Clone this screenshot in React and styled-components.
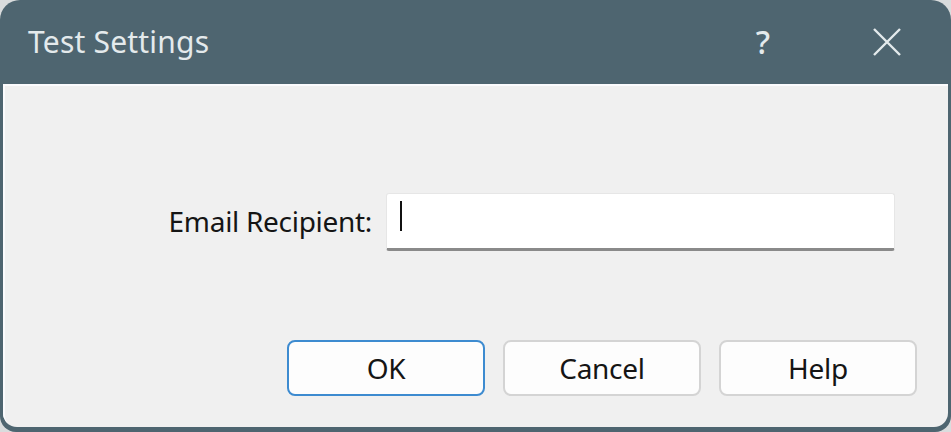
import React from "react";
import styled, { createGlobalStyle } from "styled-components";

const GlobalStyle = createGlobalStyle`
  html, body {
    margin: 0;
    padding: 0;
    background: #d9dcdd;
  }
  body {
    font-family: "Noto Sans", "Open Sans", "Liberation Sans", sans-serif;
  }
`;

function CloseIcon() {
  return (
    <svg width="30" height="30" viewBox="0 0 30 30">
      <path d="M2 2 L28 28 M28 2 L2 28" stroke="#e4eaec" strokeWidth="2.4" fill="none" />
    </svg>
  );
}

function App() {
  return (
    <>
      <GlobalStyle />
      <S.Window>
        <S.TitleBar>
          <S.Title>Test Settings</S.Title>
          <S.TitleButtons>
            <S.HelpMark>?</S.HelpMark>
            <S.CloseButton>
              <CloseIcon />
            </S.CloseButton>
          </S.TitleButtons>
        </S.TitleBar>

        <S.Client>
          <S.FieldRow>
            <S.Label htmlFor="email">Email Recipient:</S.Label>
            <S.InputBox>
              <S.Caret />
            </S.InputBox>
          </S.FieldRow>

          <S.ButtonRow>
            <S.Button $default>OK</S.Button>
            <S.Button>Cancel</S.Button>
            <S.Button>Help</S.Button>
          </S.ButtonRow>
        </S.Client>
      </S.Window>
    </>
  );
}

const S = {
  Window: styled.div`
    width: 951px;
    height: 432px;
    box-sizing: border-box;
    background: #4e6570;
    border-radius: 20px 20px 16px 16px;
    display: flex;
    flex-direction: column;
    padding: 0 3px 5px 3px;
    overflow: hidden;
  `,
  TitleBar: styled.div`
    height: 84px;
    flex-shrink: 0;
    display: flex;
    align-items: center;
    justify-content: space-between;
    padding: 0 0 0 25px;
  `,
  Title: styled.div`
    color: #e4eaec;
    font-size: 30px;
    margin-top: -2px;
    letter-spacing: 0.2px;
  `,
  TitleButtons: styled.div`
    display: flex;
    align-items: center;
    margin-right: 46px;
  `,
  HelpMark: styled.div`
    color: #e4eaec;
    font-size: 32px;
    font-weight: 500;
    width: 40px;
    text-align: center;
    margin-right: 89px;
    margin-top: -2px;
  `,
  CloseButton: styled.div`
    width: 30px;
    height: 30px;
    display: flex;
  `,
  Client: styled.div`
    flex: 1;
    background: #f0f0f0;
    border-radius: 0 0 14px 14px;
    box-shadow: inset 2px 2px 0 #fbfbfd;
    display: flex;
    flex-direction: column;
  `,
  FieldRow: styled.div`
    display: flex;
    justify-content: flex-end;
    align-items: center;
    gap: 14px;
    padding: 109px 53px 0 0;
  `,
  Label: styled.label`
    font-size: 28px;
    color: #151515;
    letter-spacing: -0.3px;
    margin-top: -2px;
  `,
  InputBox: styled.div`
    width: 509px;
    height: 58px;
    box-sizing: border-box;
    background: #ffffff;
    border: 1px solid #e6e6e6;
    border-bottom: 3px solid #8a8a8a;
    border-radius: 3px;
    display: flex;
    align-items: center;
    padding-left: 13px;
  `,
  Caret: styled.div`
    width: 2px;
    height: 30px;
    background: #111;
    margin-top: -10px;
  `,
  ButtonRow: styled.div`
    display: flex;
    justify-content: flex-end;
    gap: 18px;
    padding: 89px 31px 0 0;
  `,
  Button: styled.button`
    width: 198px;
    height: 56px;
    box-sizing: border-box;
    background: #fdfdfd;
    border: ${({ $default }) => ($default ? "2px solid #3d8bd0" : "2px solid #d4d4d4")};
    border-radius: 8px;
    font-family: inherit;
    font-size: 28px;
    color: #151515;
    padding: 0;
    letter-spacing: -0.3px;
  `,
};

export default App;
